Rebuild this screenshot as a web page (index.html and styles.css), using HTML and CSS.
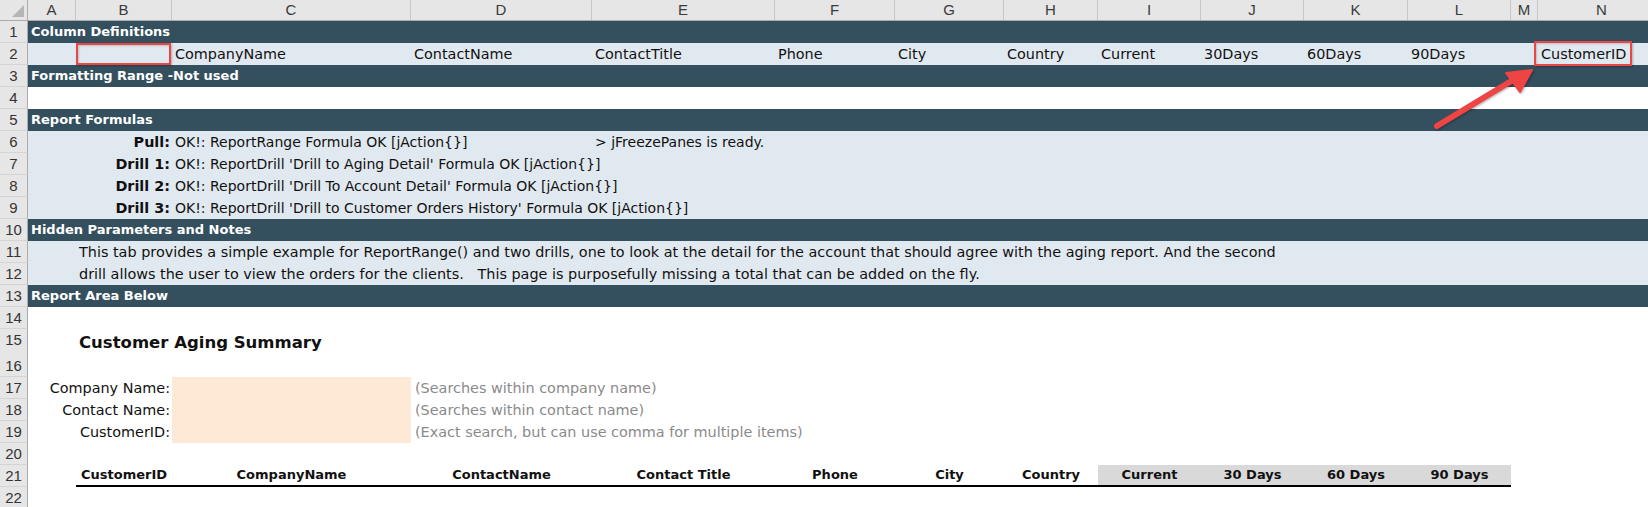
FILE: index.html
```html
<!DOCTYPE html>
<html>
<head>
<meta charset="utf-8">
<link rel="stylesheet" href="styles.css">
</head>
<body>
<div class="sheet">
  <div class="row colhdr">
    <div class="corner"><svg class="tri" width="14" height="14" viewBox="0 0 14 14"><polygon points="13,1 13,13 1,13" fill="#b5b5b5"/></svg></div>
    <div class="ch">A</div><div class="ch">B</div><div class="ch">C</div><div class="ch">D</div><div class="ch">E</div><div class="ch">F</div><div class="ch">G</div><div class="ch">H</div><div class="ch">I</div><div class="ch">J</div><div class="ch">K</div><div class="ch">L</div><div class="ch">M</div><div class="ch">N</div><div class="ch"></div>
  </div>

  <div class="row dark"><div class="rh">1</div><div class="c band-title">Column Definitions</div></div>

  <div class="row light">
    <div class="rh">2</div>
    <div class="c"></div>
    <div class="c boxed"><span class="redbox rb-b"></span></div>
    <div class="c">CompanyName</div>
    <div class="c">ContactName</div>
    <div class="c">ContactTitle</div>
    <div class="c">Phone</div>
    <div class="c">City</div>
    <div class="c">Country</div>
    <div class="c">Current</div>
    <div class="c">30Days</div>
    <div class="c">60Days</div>
    <div class="c">90Days</div>
    <div class="c"></div>
    <div class="c boxed">CustomerID<span class="redbox rb-n"></span></div>
  </div>

  <div class="row dark"><div class="rh">3</div><div class="c band-title">Formatting Range -Not used</div></div>
  <div class="row"><div class="rh">4</div></div>
  <div class="row dark"><div class="rh">5</div><div class="c band-title">Report Formulas</div></div>

  <div class="row light formula"><div class="rh">6</div><div class="lbl">Pull:</div><div class="c span-cd">OK!: ReportRange Formula OK [jAction{}]</div><div class="c span-e">&gt; jFreezePanes is ready.</div></div>
  <div class="row light formula"><div class="rh">7</div><div class="lbl">Drill 1:</div><div class="c span-c">OK!: ReportDrill 'Drill to Aging Detail' Formula OK [jAction{}]</div></div>
  <div class="row light formula"><div class="rh">8</div><div class="lbl">Drill 2:</div><div class="c span-c">OK!: ReportDrill 'Drill To Account Detail' Formula OK [jAction{}]</div></div>
  <div class="row light formula"><div class="rh">9</div><div class="lbl">Drill 3:</div><div class="c span-c">OK!: ReportDrill 'Drill to Customer Orders History' Formula OK [jAction{}]</div></div>

  <div class="row dark"><div class="rh">10</div><div class="c band-title">Hidden Parameters and Notes</div></div>
  <div class="row light"><div class="rh">11</div><div class="c span-b">This tab provides a simple example for ReportRange() and two drills, one to look at the detail for the account that should agree with the aging report. And the second</div></div>
  <div class="row light"><div class="rh">12</div><div class="c span-b">drill allows the user to view the orders for the clients.   This page is purposefully missing a total that can be added on the fly.</div></div>
  <div class="row dark"><div class="rh">13</div><div class="c band-title">Report Area Below</div></div>

  <div class="row"><div class="rh">14</div></div>
  <div class="row tall"><div class="rh">15</div><div class="c span-b title">Customer Aging Summary</div></div>
  <div class="row"><div class="rh">16</div></div>

  <div class="row"><div class="rh">17</div><div class="lbl normal">Company Name:</div><div class="c peach"></div><div class="c hint">(Searches within company name)</div></div>
  <div class="row"><div class="rh">18</div><div class="lbl normal">Contact Name:</div><div class="c peach"></div><div class="c hint">(Searches within contact name)</div></div>
  <div class="row"><div class="rh">19</div><div class="lbl normal">CustomerID:</div><div class="c peach"></div><div class="c hint">(Exact search, but can use comma for multiple items)</div></div>

  <div class="row"><div class="rh">20</div></div>

  <div class="row thead">
    <div class="rh">21</div>
    <div class="c"></div>
    <div class="th">CustomerID</div>
    <div class="th">CompanyName</div>
    <div class="th">ContactName</div>
    <div class="th">Contact Title</div>
    <div class="th">Phone</div>
    <div class="th">City</div>
    <div class="th">Country</div>
    <div class="th grey">Current</div>
    <div class="th grey">30 Days</div>
    <div class="th grey">60 Days</div>
    <div class="th grey">90 Days</div>
  </div>

  <div class="row"><div class="rh">22</div></div>
  <div class="row"><div class="rh"></div></div>

  <svg class="arrow" width="1648" height="507" viewBox="0 0 1648 507">
    <line x1="1437" y1="126" x2="1513" y2="80" stroke="#ee4444" stroke-width="6" stroke-linecap="round"/>
    <polygon points="1532,70 1506,73 1520,92" fill="#ee4444" stroke="#ee4444" stroke-width="2" stroke-linejoin="round"/>
  </svg>
</div>
</body>
</html>
```

FILE: styles.css
```css
* { box-sizing: border-box; }
html, body { margin: 0; padding: 0; }
body {
  width: 1648px;
  height: 507px;
  overflow: hidden;
  background: #ffffff;
  font-family: "DejaVu Sans", sans-serif;
  font-size: 14.4px;
  color: #111;
}
.sheet {
  position: relative;
  width: 1760px;
  --cols: 28px 48px 96px 239px 181px 183px 120px 109px 94px 103px 103px 104px 103px 27px 128px 1fr;
}
.row {
  display: grid;
  grid-template-columns: var(--cols);
  height: 22px;
}
.row.tall { height: 26px; }
.row.formula .c { font-size: 14px; }
.colhdr {
  height: 21px;
  background: #e6e6e6;
  border-bottom: 1px solid #ababab;
}
.corner {
  position: relative;
  border-right: 1px solid #ababab;
}
.tri { position: absolute; right: 2px; bottom: 2px; }
.ch {
  border-right: 1px solid #c6c6c6;
  text-align: center;
  font-family: "Liberation Sans", sans-serif;
  font-size: 15px;
  line-height: 20px;
  color: #3a3a3a;
}
.rh {
  grid-column: 1;
  background: #e6e6e6;
  border-right: 1px solid #ababab;
  border-bottom: 1px solid #d4d4d4;
  text-align: center;
  font-family: "Liberation Sans", sans-serif;
  font-size: 15px;
  line-height: 21px;
  color: #333;
}
.dark { background: #344f5e; }
.light { background: #e1e9f0; }
.c {
  white-space: pre;
  line-height: 22px;
  padding-left: 3px;
  min-width: 0;
}
.band-title {
  grid-column: 2 / -1;
  color: #ffffff;
  font-weight: bold;
  font-size: 13px;
  padding-left: 3px;
}
.boxed { position: relative; }
.redbox {
  position: absolute;
  border: 2px solid #ea4646;
  box-shadow: 1px 1px 2px rgba(0,0,0,0.25), inset 1px 1px 2px rgba(0,0,0,0.18);
}
.rb-b { left: 0; top: 0; width: 95px; height: 22px; }
.rb-n { left: -4px; top: -2px; width: 98px; height: 25px; }
.lbl {
  grid-column: 2 / 4;
  text-align: right;
  padding-right: 2px;
  font-weight: bold;
  line-height: 22px;
  white-space: nowrap;
}
.lbl.normal { font-weight: normal; }
.span-cd { grid-column: 4 / 6; }
.span-e { grid-column: 6 / -1; }
.span-c { grid-column: 4 / -1; }
.span-b { grid-column: 3 / -1; }
.title {
  font-weight: bold;
  font-size: 16.5px;
  line-height: 26px;
  padding-top: 1px;
}
.peach { grid-column: 4; background: #fde9d5; }
.hint { grid-column: 5 / -1; color: #8a8a8a; padding-left: 4px; }
.th {
  text-align: center;
  font-weight: bold;
  font-size: 13px;
  line-height: 20px;
  white-space: nowrap;
  border-bottom: 2px solid #000;
}
.th.grey { background: #d9d9d9; }
.arrow {
  position: absolute;
  left: 0;
  top: 0;
  pointer-events: none;
  filter: drop-shadow(1px 1px 1px rgba(0,0,0,0.3));
}
```
